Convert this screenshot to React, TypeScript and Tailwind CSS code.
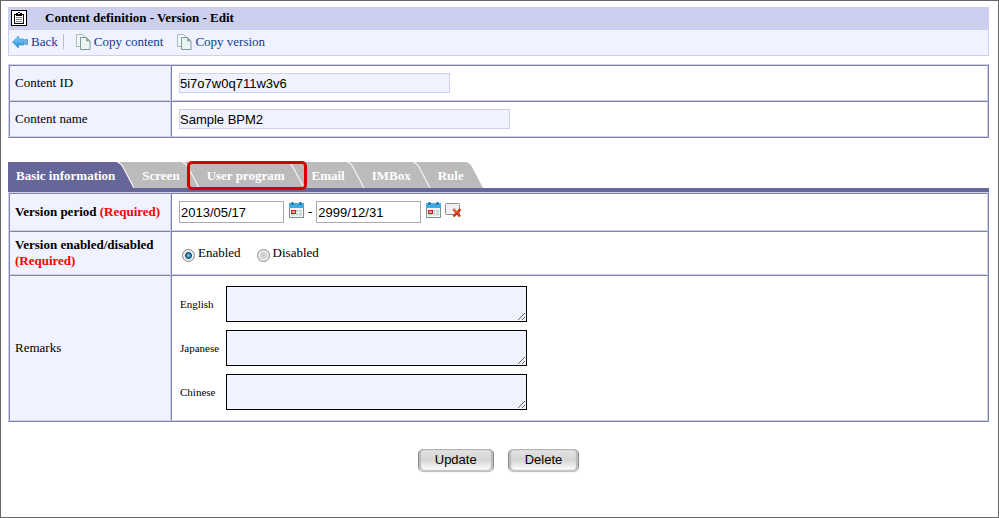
import React from 'react';

const tabs = ['Basic information', 'Screen', 'User program', 'Email', 'IMBox', 'Rule'];

const languages = ['English', 'Japanese', 'Chinese'];

const tableClass =
  'w-full table-fixed border-separate border-spacing-0 border-t border-l border-b border-r border-t-[#cccfee] border-l-[#cccfee] border-b-[#8083a3] border-r-[#8083a3]';
const cellBorder =
  'border border-t-[#8083a3] border-l-[#8083a3] border-b-[#cccfee] border-r-[#cccfee]';
const headCell = `${cellBorder} w-[162px] bg-[#f0f2ff] px-[5px] text-left align-middle`;
const bodyCell = `${cellBorder} px-[7px] align-middle`;

const ClipboardIcon = () => (
  <svg width="16" height="16" viewBox="0 0 16 16" aria-hidden="true" shapeRendering="crispEdges">
    <rect x="0.5" y="0.5" width="15" height="15" fill="#fff" stroke="#000" />
    <path d="M3.5 4.500h9v9h-9z" fill="#fff" stroke="#000" />
    <path d="M5 3h2v-1h2v1h2v3h-6z" fill="#000" />
    <rect x="7" y="3" width="2" height="1" fill="#fff" />
    <path d="M5 7.500h6M5 9.500h6M5 11.500h6" stroke="#888" />
  </svg>
);

const BackIcon = () => (
  <svg width="16" height="14" viewBox="0 0 16 14" aria-hidden="true">
    <defs>
      <linearGradient id="back-arrow" x1="0" y1="0" x2="0" y2="1">
        <stop offset="0" stopColor="#9bd8fa" />
        <stop offset="0.500" stopColor="#52b0ec" />
        <stop offset="1" stopColor="#2779c0" />
      </linearGradient>
    </defs>
    <path d="M0.5 7L6.500 1v3h5.500v6h-5.500v3z" fill="url(#back-arrow)" stroke="#4797d2" strokeWidth="0.8" />
    <rect x="13" y="4.500" width="2.500" height="5" rx="0.500" fill="#72bdec" stroke="#3a88c4" strokeWidth="0.8" />
  </svg>
);

const CopyIcon = () => (
  <svg width="15" height="16" viewBox="0 0 15 16" aria-hidden="true">
    <path d="M0.500 0.500h6l3 3v9h-9z" fill="#f3f8f8" stroke="#a9b8b8" />
    <path d="M4.500 3.500h6l3.500 3.500v8.500h-9.500z" fill="#e9f6f4" stroke="#7f9a9a" />
    <path d="M10 3.500l4 4h-4z" fill="#8fa8a8" />
  </svg>
);

const CalendarIcon = () => (
  <svg width="15" height="16" viewBox="0 0 15 16" aria-hidden="true">
    <rect x="0.500" y="2.500" width="14" height="13" fill="#f4f8f8" stroke="#7d9090" />
    <rect x="0" y="1" width="15" height="5" fill="#3fade3" />
    <path d="M3.500 0v3M11.500 0v3" stroke="#226f9c" strokeWidth="2" />
    <path d="M2 8h11v5.500h-11z" fill="#c2d2d5" />
    <path d="M2 10.500h11M6.500 8v6M9.500 8v6" stroke="#f4f8f8" />
    <rect x="2.500" y="8.500" width="4" height="3" fill="#f7a39c" stroke="#c7241b" />
  </svg>
);

const ClearIcon = () => (
  <svg width="17" height="15" viewBox="0 0 17 15" aria-hidden="true">
    <rect x="0.500" y="0.500" width="14" height="11" rx="1" fill="#f1f1f4" stroke="#8d8d92" />
    <path d="M8.500 6l6.500 7.500M15.500 6l-7 7.500" stroke="#d9300f" strokeWidth="2.500" />
    <path d="M9 6l3 3.500" stroke="#ff9a6a" />
  </svg>
);

const TabEdge = ({ active, last }: { active: boolean; last: boolean }) => (
  <svg width="17" height="26" viewBox="0 0 17 26" aria-hidden="true" className="shrink-0">
    {!last && <rect width="17" height="26" fill="#bbbbbb" />}
    <path d="M0 0Q4 1 6 5L17 26H0z" fill={active ? '#666699' : '#bbbbbb'} />
    {!last && <path d="M0 0Q4 1 6 5L17 26" fill="none" stroke="#f4f4f8" strokeWidth="1.200" />}
  </svg>
);

const App = () => {
  return (
    <div className="min-h-screen border border-[#666666] bg-white px-[7px] pt-[6px] pr-[9px] font-['Liberation_Serif','Times_New_Roman',serif] text-[13px] leading-4 text-black">
      <header className="flex h-[23px] items-center gap-[18px] bg-[#cccfee] pb-px pl-[3px]">
        <ClipboardIcon />
        <h1 className="font-bold">Content definition - Version - Edit</h1>
      </header>
      <nav className="flex h-[26px] items-center border border-t-0 border-[#cccfee] bg-[#f0f2ff] pb-[2px] pl-[3px] text-[#113a8f]">
        <a href="#back" className="flex items-center gap-[3px]">
          <BackIcon />
          Back
        </a>
        <div className="mr-3 ml-[5px] h-[15px] w-px bg-[#bbbbbb]"></div>
        <a href="#copy-content" className="mr-[14px] flex items-center gap-[3px]">
          <CopyIcon />
          Copy content
        </a>
        <a href="#copy-version" className="flex items-center gap-[3px]">
          <CopyIcon />
          Copy version
        </a>
      </nav>

      <table className={`${tableClass} mt-2`}>
        <tbody>
          <tr className="h-9">
            <th scope="row" className={`${headCell} font-normal`}>
              <label htmlFor="content-id">Content ID</label>
            </th>
            <td className={bodyCell}>
              <input
                id="content-id"
                type="text"
                readOnly
                defaultValue="5i7o7w0q711w3v6"
                className="block h-5 w-[271px] border border-[#cccfee] bg-[#f0f2ff] font-['Liberation_Sans',Arial,sans-serif]"
              />
            </td>
          </tr>
          <tr className="h-9">
            <th scope="row" className={`${headCell} font-normal`}>
              <label htmlFor="content-name">Content name</label>
            </th>
            <td className={bodyCell}>
              <input
                id="content-name"
                type="text"
                readOnly
                defaultValue="Sample BPM2"
                className="block h-5 w-[331px] border border-[#cccfee] bg-[#f0f2ff] font-['Liberation_Sans',Arial,sans-serif]"
              />
            </td>
          </tr>
        </tbody>
      </table>

      <div role="tablist" className="mt-6 flex border-b-4 border-[#666699]">
        {tabs.map((tab, index) => (
          <div key={tab} className="relative flex h-[26px]">
            <button
              type="button"
              role="tab"
              aria-selected={index === 0}
              className={`pt-[6px] pr-[2px] pb-1 pl-2 font-bold text-white ${index === 0 ? 'bg-[#666699]' : 'bg-[#bbbbbb]'}`}
            >
              {tab}
            </button>
            <TabEdge active={index === 0} last={index === tabs.length - 1} />
            {/* Highlighted tab */}
            {tab === 'User program' && (
              <div className="pointer-events-none absolute -top-px -right-[3px] -bottom-[2px] -left-3 z-10 rounded-[5px] border-3 border-[#d40000]"></div>
            )}
          </div>
        ))}
      </div>

      <table className={tableClass}>
        <tbody>
          <tr className="h-[38px]">
            <th scope="row" className={`${headCell} font-bold`}>
              Version period <span className="text-[#ff0000]">(Required)</span>
            </th>
            <td className={bodyCell}>
              <div className="flex items-center">
                <input
                  type="text"
                  aria-label="Start date"
                  defaultValue="2013/05/17"
                  className="h-[22px] w-[105px] border border-[#aaaaaa] px-px font-['Liberation_Sans',Arial,sans-serif]"
                />
                <button type="button" aria-label="Choose start date" className="mr-1 mb-1 ml-[5px]">
                  <CalendarIcon />
                </button>
                <span className="mr-1">-</span>
                <input
                  type="text"
                  aria-label="End date"
                  defaultValue="2999/12/31"
                  className="h-[22px] w-[105px] border border-[#aaaaaa] px-px font-['Liberation_Sans',Arial,sans-serif]"
                />
                <button type="button" aria-label="Choose end date" className="mr-1 mb-1 ml-[5px]">
                  <CalendarIcon />
                </button>
                <button type="button" aria-label="Clear end date" className="mb-1">
                  <ClearIcon />
                </button>
              </div>
            </td>
          </tr>
          <tr className="h-11">
            <th scope="row" className={`${headCell} font-bold`}>
              Version enabled/disabled <span className="block text-[#ff0000]">(Required)</span>
            </th>
            <td className={bodyCell}>
              <div className="flex gap-4 pl-[3px]">
                {['Enabled', 'Disabled'].map((state) => (
                  <label key={state} className="flex items-end gap-[3px]">
                    <input
                      type="radio"
                      name="version-state"
                      defaultChecked={state === 'Enabled'}
                      className="size-[13px] appearance-none rounded-full border border-[#888888] bg-[radial-gradient(circle,#cccccc_20%,#f4f4f4_75%)] checked:bg-[radial-gradient(circle,#5bc4ea_10%,#12486f_38%,#eeeeee_50%)]"
                    />
                    <span className="pb-px">{state}</span>
                  </label>
                ))}
              </div>
            </td>
          </tr>
          <tr>
            <th scope="row" className={`${headCell} font-normal`}>
              Remarks
            </th>
            <td className={`${bodyCell} py-[10px]`}>
              <div className="flex flex-col gap-2">
                {languages.map((language) => (
                  <div key={language} className="flex items-center">
                    <label htmlFor={`remarks-${language}`} className="w-[47px] pl-px text-[11px]">
                      {language}
                    </label>
                    <textarea
                      id={`remarks-${language}`}
                      className="block h-9 w-[301px] border border-black bg-[#f0f2ff] px-1"
                    ></textarea>
                  </div>
                ))}
              </div>
            </td>
          </tr>
        </tbody>
      </table>

      <div className="mt-[27px] mb-6 flex justify-center gap-[14px] font-['Liberation_Sans',Arial,sans-serif]">
        {['Update', 'Delete'].map((action) => (
          <button
            key={action}
            type="button"
            className="h-[22px] rounded-[5px] border border-x-[#8f8f8f] border-t-[#b4b4b4] border-b-[#c4c4c4] bg-linear-to-b from-[#e4e4e4] via-[#d6d4d4] to-white px-4 shadow-[inset_2px_0_1px_#bbbbbb,inset_-2px_0_1px_#bbbbbb,0_1px_1px_#bbbbbb]"
          >
            {action}
          </button>
        ))}
      </div>
    </div>
  );
};

export default App;
